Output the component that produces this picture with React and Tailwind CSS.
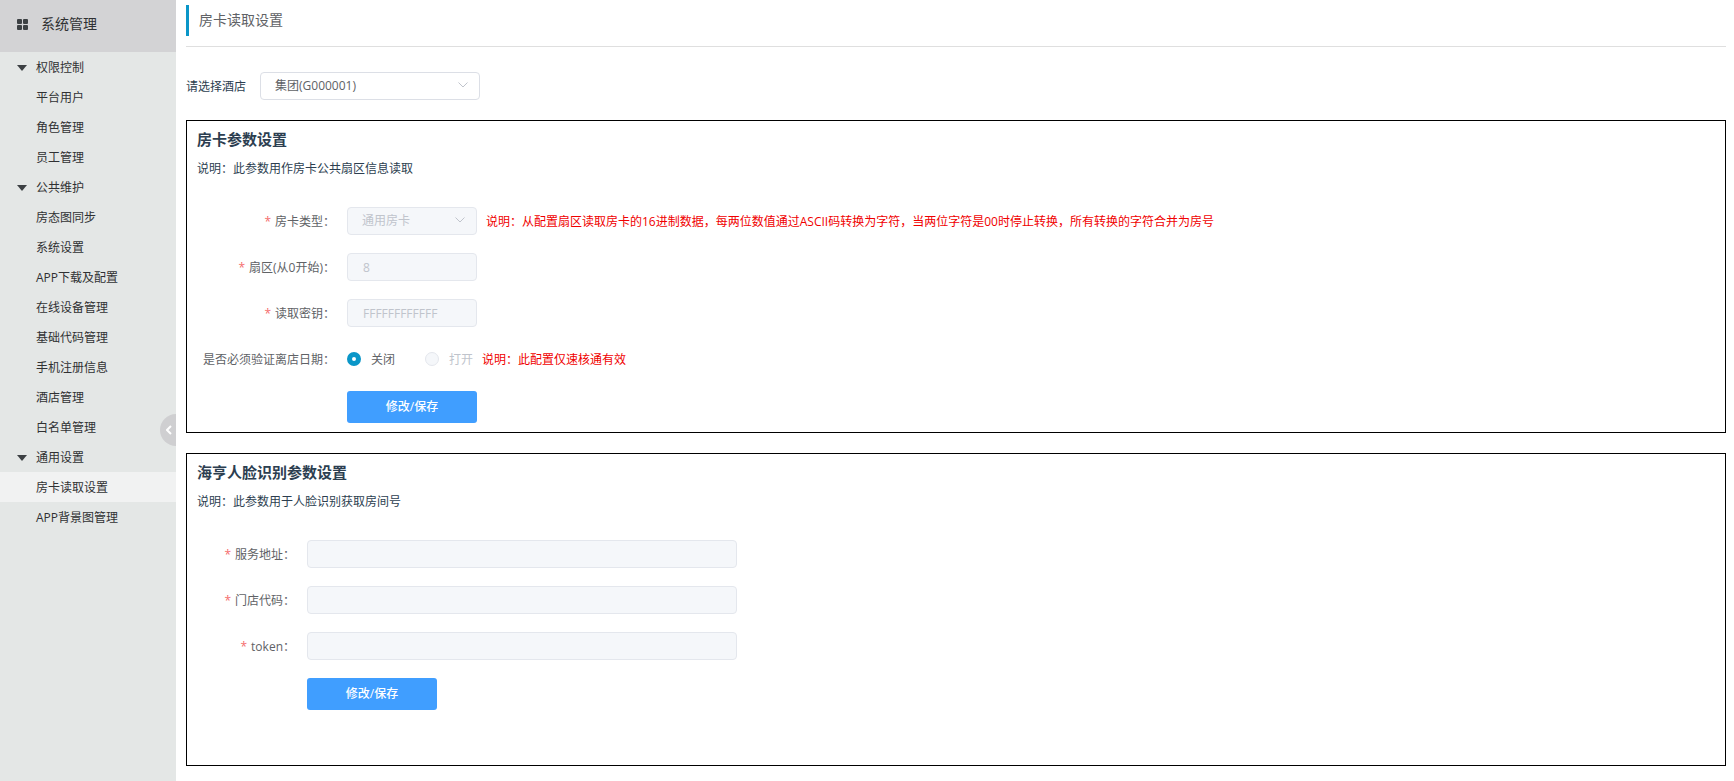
import React from "react";

const MENU = [
  { title: "权限控制", items: ["平台用户", "角色管理", "员工管理"] },
  {
    title: "公共维护",
    items: [
      "房态图同步",
      "系统设置",
      "APP下载及配置",
      "在线设备管理",
      "基础代码管理",
      "手机注册信息",
      "酒店管理",
      "白名单管理",
    ],
  },
  { title: "通用设置", items: ["房卡读取设置", "APP背景图管理"] },
];

const ACTIVE = "房卡读取设置";

function Sidebar() {
  return (
    <aside className="relative w-[176px] shrink-0 bg-[#e4e7e6] text-[#303133]">
      <div className="flex h-[52px] items-center bg-[#d3d3d5] pb-1 pl-[17px] text-sm">
        <svg className="mr-[13px] h-[11px] w-[11px] fill-[#3c4043]" viewBox="0 0 11 11" aria-hidden="true">
          <rect x="0" y="0" width="5" height="5" rx="1" />
          <rect x="6" y="0" width="5" height="5" rx="1" />
          <rect x="0" y="6" width="5" height="5" rx="1" />
          <rect x="6" y="6" width="5" height="5" rx="1" />
        </svg>
        系统管理
      </div>
      <nav className="text-xs">
        {MENU.map((group) => (
          <div key={group.title}>
            <button type="button" className="flex h-[30px] w-full items-center pt-0.5 pl-[17px] text-left">
              <svg className="mr-[9px] h-[6px] w-[10px] fill-[#3c4043]" viewBox="0 0 10 6" aria-hidden="true">
                <path d="M0 0H10L5 6Z" />
              </svg>
              {group.title}
            </button>
            {group.items.map((item) => (
              <a
                key={item}
                href="#"
                className={
                  item === ACTIVE
                    ? "flex h-[30px] items-center bg-[#f1f2f2] pt-0.5 pl-9"
                    : "flex h-[30px] items-center pt-0.5 pl-9"
                }
              >
                {item}
              </a>
            ))}
          </div>
        ))}
      </nav>
      <button
        type="button"
        aria-label="收起菜单"
        className="absolute top-[55%] right-0 flex h-8 w-4 -translate-y-1/2 items-center justify-center rounded-l-full bg-[#cfcfd1] pl-0.5"
      >
        <svg className="h-[10px] w-[6px]" viewBox="0 0 6 10" fill="none" stroke="#fff" strokeWidth="2" aria-hidden="true">
          <path d="M5 1L1 5L5 9" />
        </svg>
      </button>
    </aside>
  );
}

function Select({ id, value, disabled, className }) {
  return (
    <div className={`relative ${className}`}>
      <select
        id={id}
        disabled={disabled}
        className="block h-7 w-full appearance-none rounded-[4px] border border-[#dcdfe6] bg-white pr-8 pl-[14px] text-xs text-[#606266] outline-none disabled:border-[#e4e7ed] disabled:bg-[#f5f7fa] disabled:text-[#c0c4cc] disabled:opacity-100"
      >
        <option>{value}</option>
      </select>
      <svg
        className="pointer-events-none absolute top-[10px] right-3 h-[6px] w-[10px]"
        viewBox="0 0 10 6"
        fill="none"
        stroke="#c0c4cc"
        aria-hidden="true"
      >
        <path d="M0.5 0.5L5 5L9.5 0.5" />
      </svg>
    </div>
  );
}

function TextInput({ id, value = "", className }) {
  return (
    <input
      id={id}
      type="text"
      defaultValue={value}
      disabled
      className={`h-7 rounded-[4px] border border-[#e4e7ed] bg-[#f5f7fa] px-[15px] text-xs text-[#c0c4cc] ${className}`}
    />
  );
}

function Field({ label, htmlFor, required, labelWidth, children }) {
  return (
    <div className="flex h-7 items-center">
      <label htmlFor={htmlFor} className={`shrink-0 pt-0.5 pr-3 text-right text-[#606266] ${labelWidth}`}>
        {required && <span className="mr-1 text-[#f56c6c]">*</span>}
        {label}
      </label>
      {children}
    </div>
  );
}

function Hint({ children }) {
  return <span className="ml-[9px] pt-0.5 text-[#f00000]">{children}</span>;
}

function Radio({ label, checked, disabled }) {
  return (
    <label
      className={
        disabled
          ? "flex items-center gap-[10px] text-[#c0c4cc]"
          : "flex items-center gap-[10px] text-[#606266]"
      }
    >
      <input
        type="radio"
        name="checkout-date"
        defaultChecked={checked}
        disabled={disabled}
        className="h-[14px] w-[14px] appearance-none rounded-full border border-[#dcdfe6] bg-white checked:border-[5px] checked:border-[#0a96c8] disabled:border-[#e4e7ed] disabled:bg-[#f5f7fa]"
      />
      <span className="pt-0.5">{label}</span>
    </label>
  );
}

function Card({ title, description, children }) {
  return (
    <section className="mt-5 min-h-[313px] border border-black px-[10px] pt-1 pb-[9px]">
      <h2 className="text-[15px] leading-7 font-bold">{title}</h2>
      <p className="leading-8">{description}</p>
      <form className="mt-[22px] flex flex-col gap-[18px]">{children}</form>
    </section>
  );
}

function SaveButton({ className }) {
  return (
    <button
      type="button"
      className={`h-8 w-[130px] rounded-[3px] bg-[#409eff] text-xs font-medium text-white ${className}`}
    >
      修改/保存
    </button>
  );
}

export default function App() {
  return (
    <div className="flex min-h-screen bg-white font-['Open_Sans','Noto_Sans_CJK_SC',sans-serif] text-xs text-[#2c3e50]">
      <Sidebar />
      <main className="min-w-0 flex-1 pr-2 pb-[14px] pl-[10px]">
        <header className="border-b border-[#dfdfdf] pt-[5px] pb-[10px]">
          <h1 className="h-[31px] border-l-[3px] border-[#0a96c8] pl-[10px] text-sm leading-[29px] text-[#606266]">
            房卡读取设置
          </h1>
        </header>

        <div className="mt-[25px] flex items-center gap-[14px]">
          <label htmlFor="hotel" className="pt-0.5">
            请选择酒店
          </label>
          <Select id="hotel" value="集团(G000001)" className="w-[220px]" />
        </div>

        <Card title="房卡参数设置" description="说明：此参数用作房卡公共扇区信息读取">
          <Field label="房卡类型：" htmlFor="card-type" required labelWidth="w-[150px]">
            <Select id="card-type" value="通用房卡" disabled className="w-[130px] shrink-0" />
            <Hint>
              说明：从配置扇区读取房卡的16进制数据，每两位数值通过ASCII码转换为字符，当两位字符是00时停止转换，所有转换的字符合并为房号
            </Hint>
          </Field>
          <Field label="扇区(从0开始)：" htmlFor="sector" required labelWidth="w-[150px]">
            <TextInput id="sector" value="8" className="w-[130px]" />
          </Field>
          <Field label="读取密钥：" htmlFor="secret" required labelWidth="w-[150px]">
            <TextInput id="secret" value="FFFFFFFFFFFF" className="w-[130px]" />
          </Field>
          <Field label="是否必须验证离店日期：" labelWidth="w-[150px]">
            <div className="flex items-center gap-[30px]">
              <Radio label="关闭" checked />
              <Radio label="打开" disabled />
            </div>
            <Hint>说明：此配置仅速核通有效</Hint>
          </Field>
          <SaveButton className="ml-[150px]" />
        </Card>

        <Card title="海亨人脸识别参数设置" description="说明：此参数用于人脸识别获取房间号">
          <Field label="服务地址：" htmlFor="service-url" required labelWidth="w-[110px]">
            <TextInput id="service-url" className="w-[430px]" />
          </Field>
          <Field label="门店代码：" htmlFor="store-code" required labelWidth="w-[110px]">
            <TextInput id="store-code" className="w-[430px]" />
          </Field>
          <Field label="token：" htmlFor="token" required labelWidth="w-[110px]">
            <TextInput id="token" className="w-[430px]" />
          </Field>
          <SaveButton className="ml-[110px]" />
        </Card>
      </main>
    </div>
  );
}
